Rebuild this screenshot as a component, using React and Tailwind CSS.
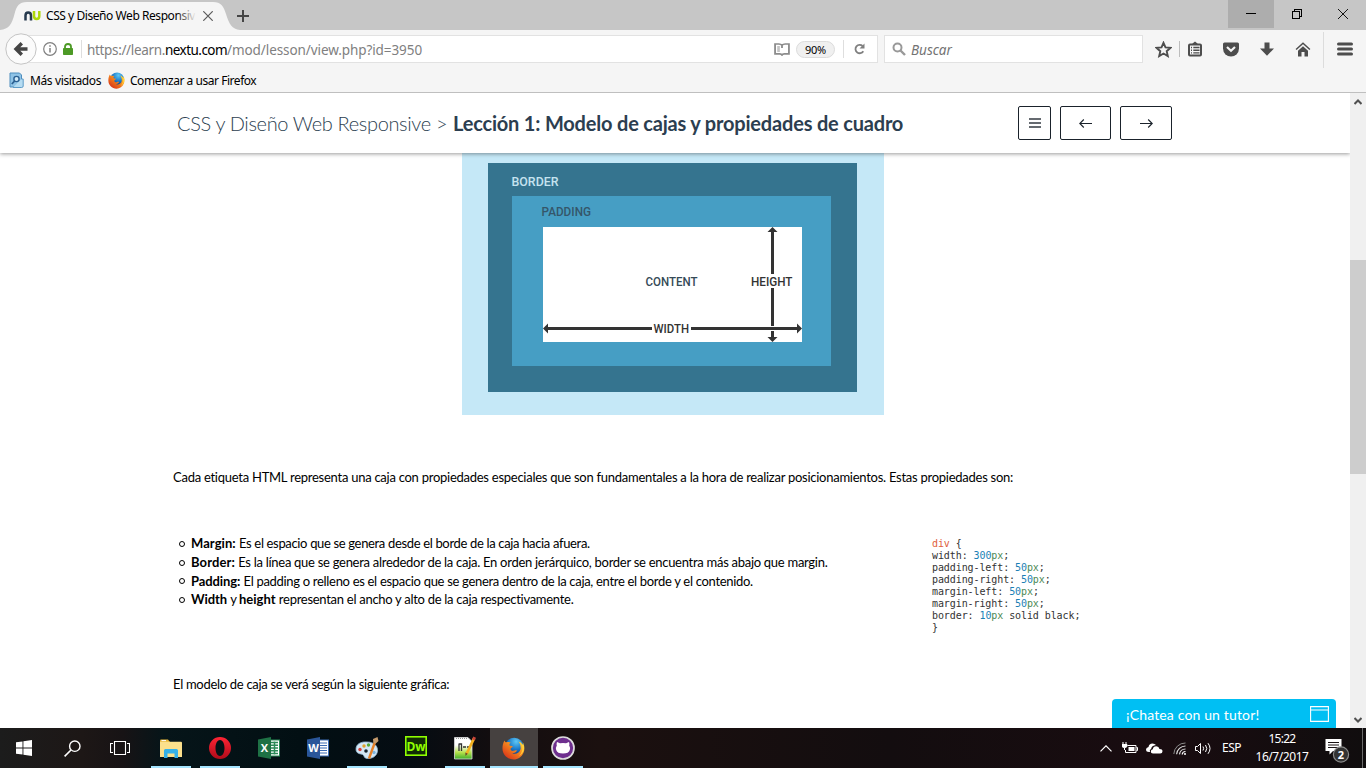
import React from "react";

const LATO = "font-['Lato','Liberation_Sans',sans-serif]";
const NOTO = "font-['Noto_Sans','Liberation_Sans',sans-serif]";

function FirefoxLogo({ size, id }) {
  return (
    <svg width={size} height={size} viewBox="0 0 24 24">
      <defs>
        <radialGradient id={id + "g"} cx="0.6" cy="0.2" r="0.7">
          <stop offset="0" stopColor="#5ec8f5" />
          <stop offset="0.6" stopColor="#1b78c8" />
          <stop offset="1" stopColor="#123e86" />
        </radialGradient>
        <linearGradient id={id + "f"} x1="0.9" y1="0.1" x2="0.2" y2="0.9">
          <stop offset="0" stopColor="#ffd83a" />
          <stop offset="0.4" stopColor="#f78d1e" />
          <stop offset="1" stopColor="#d93a1a" />
        </linearGradient>
      </defs>
      <circle cx="12.8" cy="10.6" r="9.8" fill={`url(#${id}g)`} />
      <path
        d="M2.6 3.6 C3 5 3.6 5.4 4.6 5.6 C6.2 5 8 5.2 9.2 6 C8.2 6.6 7.4 7.6 8 8.8 C9 9.4 10.4 9 11.2 9.6 C11 10.8 9.4 11 9 12 C8.6 13.8 10.4 14.8 12.2 14.4 C13.6 14 14.6 13.6 15.6 14.2 C14.6 16.4 12.6 17.2 10.6 17 C14.2 18.6 18.6 16.8 19.4 12.6 C19.8 9.6 18.8 6.6 17.2 4.8 C20.4 5.6 21.8 8 22 9 C22.3 8 22 6.4 21.4 5.2 C23.6 8 23.9 13 22.4 16.4 C20.4 21 16.4 23.6 12 23.5 C5.6 23.4 0.5 18.4 0.5 12 C0.5 8.600 1.2 6 2.6 3.600Z"
        fill={`url(#${id}f)`}
      />
      <path d="M20.6 7.500 C22.300 12 21 17 17.500 19.800 C21.600 18.400 23.900 13 22.600 8.600 Z" fill="#ffd23a" />
    </svg>
  );
}

function TabStrip() {
  return (
    <div className="flex h-[30px] bg-[#c6c6c6]">
      <div className="relative h-[30px] w-[230px] shrink-0">
        <svg className="absolute left-0 top-0" width="240" height="30" viewBox="0 0 240 30">
          <path d="M0 30 C9 29 12 24 14.500 14 C16.500 6 19 2 27 2 H213 C221 2 223.500 6 226 14 C229 24 232 29 240 30 Z" fill="#f5f5f5" />
        </svg>
        <div className="relative flex h-[30px] items-center pl-6">
          <svg className="mt-[2px] shrink-0" width="17" height="10" viewBox="0 0 17 10">
            <path d="M1.500 9.500 V4.500 Q1.500 1.500 4.200 1.500 Q7 1.500 7 4.500 V9.500" fill="none" stroke="#26394d" strokeWidth="2.500" />
            <path d="M10 0 V5 Q10 8 12.700 8 Q15.300 8 15.300 5 V0" fill="none" stroke="#aed80a" strokeWidth="2.500" />
          </svg>
          <div className={NOTO + " relative ml-[5px] mt-px w-[150px] overflow-hidden whitespace-nowrap text-[12px] leading-4 tracking-[-0.44px] text-black"}>
            CSS y Diseño Web Responsiv
            <div className="absolute right-0 top-0 h-4 w-5 bg-gradient-to-r from-[#f5f5f500] to-[#f5f5f5]" />
          </div>
          <svg className="ml-[7px] mt-[2px] shrink-0" width="10" height="10" viewBox="0 0 10 10">
            <path d="M0.300 0.300 L9.700 9.700 M9.700 0.300 L0.300 9.700" stroke="#5a5a5a" strokeWidth="1.200" />
          </svg>
        </div>
      </div>
      <svg className="ml-[7px] mt-[10px]" width="12" height="12" viewBox="0 0 12 12">
        <path d="M6 0 V12 M0 6 H12" stroke="#454545" strokeWidth="2" />
      </svg>
      <div className="ml-auto flex">
        <div className="flex h-7 w-[46px] items-center justify-center bg-[#adadad]">
          <svg width="10" height="10" shapeRendering="crispEdges"><path d="M0 4.500 H10" stroke="#000" /></svg>
        </div>
        <div className="flex h-7 w-[46px] items-center justify-center">
          <svg width="10" height="10" shapeRendering="crispEdges">
            <path d="M0.500 2.500 H7.500 V9.500 H0.500 Z M2.500 2.500 V0.500 H9.500 V7.500 H7.500" fill="none" stroke="#000" />
          </svg>
        </div>
        <div className="flex h-7 w-[46px] items-center justify-center">
          <svg width="10" height="10"><path d="M0 0 L10 10 M10 0 L0 10" stroke="#000" strokeWidth="0.900" /></svg>
        </div>
      </div>
    </div>
  );
}

function NavBar() {
  return (
    <div className="flex h-[39px] bg-[#f5f5f5]">
      <div className="relative flex w-[878px] shrink-0 pl-6 pt-[5px]">
        <div className="flex h-7 flex-1 items-center border border-[#e2e2e2] bg-white pl-[18px]">
          <svg width="14" height="14" viewBox="0 0 14 14">
            <circle cx="7" cy="7" r="6.300" fill="none" stroke="#808080" strokeWidth="1.200" />
            <path d="M7 6 V10.600 M7 3.200 V4.800" stroke="#808080" strokeWidth="1.500" />
          </svg>
          <svg className="ml-[6px]" width="10" height="12" viewBox="0 0 10 12">
            <rect x="0" y="5" width="10" height="7" rx="0.800" fill="#4d9a26" />
            <path d="M2 6 V3.800 Q2 1 5 1 Q8 1 8 3.800 V6" fill="none" stroke="#4d9a26" strokeWidth="1.800" />
          </svg>
          <div className="ml-2 h-[18px] w-px bg-[#dedede]" />
          <div className={NOTO + " ml-[5px] flex whitespace-nowrap pt-[2px] text-[13.500px] leading-5 text-[#808080]"}>
            <span className="w-[78px] tracking-[-0.34px]">https://learn.</span>
            <span className="w-[62px] tracking-[-0.54px] text-black">nextu.com</span>
            <span className="tracking-[-0.08px]">/mod/lesson/view.php?id=3950</span>
          </div>
          <svg className="ml-auto" width="16" height="13" viewBox="0 0 15 13" preserveAspectRatio="none">
            <path d="M7.500 2.200 Q6.500 1 4.500 1 H1 V10.800 H5.500 Q7 10.800 7.500 12 Q8 10.800 9.500 10.800 H14 V1 H10.500 Q8.500 1 7.500 2.200 V5" fill="none" stroke="#8c8c8c" strokeWidth="1.700" />
            <path d="M3 4 H5.500 M3 6 H5.500 M3 8 H5.500" stroke="#8c8c8c" />
          </svg>
          <div className={NOTO + " ml-[6px] flex h-[17px] w-[39px] items-center justify-center rounded-full border border-[#dcdcdc] bg-[#f0f0f0] pt-[2px] text-[11px] tracking-[-0.25px] text-black"}>
            90%
          </div>
          <div className="ml-[8px] h-[18px] w-px bg-[#dedede]" />
          <svg className="ml-[10px] mr-[12px]" width="11" height="12" viewBox="0 0 11 12">
            <path d="M8.600 3 A4.200 4.200 0 1 0 9.300 8.200" fill="none" stroke="#808080" strokeWidth="1.800" />
            <path d="M10.500 0.500 V5.500 H5.500 Z" fill="#808080" />
          </svg>
        </div>
        <svg className="absolute left-[5px] top-[3px]" width="32" height="32" viewBox="0 0 32 32">
          <circle cx="16" cy="16" r="15.200" fill="#fbfbfb" stroke="#c4c4c4" />
          <path d="M16.800 10.200 L11 16 L16.800 21.800 M11.500 16 H22.500" fill="none" stroke="#454545" strokeWidth="3.400" />
        </svg>
      </div>
      <div className="ml-[6px] mt-[5px] flex h-7 w-[259px] shrink-0 items-center border border-[#e2e2e2] bg-white pl-[7px]">
        <svg width="14" height="14" viewBox="0 0 14 14">
          <circle cx="5.500" cy="5.500" r="4" fill="none" stroke="#999" strokeWidth="2" />
          <path d="M8.500 8.500 L13 13" stroke="#999" strokeWidth="2.400" />
        </svg>
        <span className={NOTO + " ml-[5px] pt-[2px] text-[13.500px] italic text-[#737373]"}>Buscar</span>
      </div>
      <div className="flex h-[38px] items-center pl-[12px]">
        <svg width="17" height="17" viewBox="0 0 17 17">
          <path d="M8.500 1.800 L10.500 6.400 L15.400 6.900 L11.700 10.200 L12.800 15.100 L8.500 12.500 L4.200 15.100 L5.300 10.200 L1.600 6.900 L6.500 6.400 Z" fill="none" stroke="#4d4d4d" strokeWidth="1.900" />
        </svg>
        <div className="ml-[7px] h-[16px] w-px bg-[#bdbdbd]" />
        <svg className="ml-[8px]" width="14" height="16" viewBox="0 0 14 16">
          <path d="M4.500 2.500 L7 0.500 L9.500 2.500 V4 H4.500 Z" fill="#4d4d4d" />
          <rect x="1" y="3.500" width="12" height="11" rx="1" fill="none" stroke="#4d4d4d" strokeWidth="2" />
          <path d="M3 6.500 H4 M5.300 6.500 H11.500 M3 9.200 H4 M5.300 9.200 H11.500 M3 11.900 H4 M5.300 11.900 H11.500" stroke="#4d4d4d" strokeWidth="1.400" />
        </svg>
        <svg className="ml-[21px]" width="16" height="15" viewBox="0 0 16 15">
          <path d="M1.500 0.500 H14.500 Q16 0.500 16 2 V6.500 A8 8 0 0 1 0 6.500 V2 Q0 0.500 1.500 0.500 Z" fill="#4d4d4d" />
          <path d="M4 5 L8 8.800 L12 5" fill="none" stroke="#f5f5f5" strokeWidth="2.200" />
        </svg>
        <svg className="ml-[21px]" width="14" height="14" viewBox="0 0 14 14">
          <path d="M4.500 0.500 H9.500 V6.500 H14 L7 13.800 L0 6.500 H4.500 Z" fill="#4d4d4d" />
        </svg>
        <svg className="ml-[21px]" width="16" height="15" viewBox="0 0 15 15">
          <path d="M0.600 7.500 L7.500 1.200 L14.400 7.500" fill="none" stroke="#4d4d4d" strokeWidth="1.500" />
          <path d="M2.500 8.800 L7.500 4.300 L12.500 8.800 V14.500 H9 V10 H6 V14.500 H2.500 Z" fill="#4d4d4d" />
        </svg>
        <div className="ml-[12px] mt-[2px] h-[36px] w-px bg-[#dcdcdc]" />
        <svg className="ml-[13px]" width="16" height="14" viewBox="0 0 16 14">
          <path d="M1.500 2 H14.500 M1.500 7 H14.500 M1.500 12 H14.500" stroke="#4d4d4d" strokeWidth="3" strokeLinecap="round" />
        </svg>
      </div>
    </div>
  );
}

function Bookmarks() {
  return (
    <div className={NOTO + " flex h-6 items-center whitespace-nowrap border-b border-[#bfbfbf] bg-[#f5f5f5] pl-[9px] text-[12px] text-black"}>
      <svg width="16" height="17" viewBox="0 0 16 17">
        <path d="M1 1 H10.500 L12.500 3 V15 H1 Z" fill="#8fc3e6" stroke="#4d8dbd" />
        <path d="M12.500 7 H14.200 V14 Q14.200 15.500 12.500 15.500 H4" fill="#b6dcf2" stroke="#5d9bc7" />
        <circle cx="7.500" cy="7" r="2.600" fill="#cfe9f8" stroke="#2a5f91" strokeWidth="1.400" />
        <path d="M5.600 9 L2.800 12" stroke="#2a5f91" strokeWidth="1.800" />
      </svg>
      <span className="ml-[5px] w-[72px] tracking-[-0.38px]">Más visitados</span>
      <span className="ml-[6px]"><FirefoxLogo size={17} id="bm" /></span>
      <span className="ml-[5px] tracking-[-0.46px]">Comenzar a usar Firefox</span>
    </div>
  );
}

function LessonHeader() {
  const btn = "flex h-[34px] items-center justify-center rounded-[2px] border border-[#1a222b] bg-white";
  return (
    <header className={LATO + " relative z-10 flex h-[60px] shrink-0 items-center whitespace-nowrap bg-white pl-[177px] text-[20px] text-[#2c3e50] shadow-[0_1px_4px_rgba(0,0,0,0.4)]"}>
      <span className="w-[276px] font-light tracking-[-0.35px]">CSS y Diseño Web Responsive &gt;</span>
      <span className="w-[565px] font-bold tracking-[-0.19px]">Lección 1: Modelo de cajas y propiedades de cuadro</span>
      <div className="flex">
        <div className={btn + " w-[33px]"}>
          <svg width="12" height="10" viewBox="0 0 12 10"><path d="M0 1 H12 M0 5 H12 M0 9 H12" stroke="#333a42" strokeWidth="1.300" /></svg>
        </div>
        <div className={btn + " ml-[9px] w-[51px]"}>
          <svg width="13" height="9" viewBox="0 0 13 9"><path d="M4.800 0.500 L0.800 4.500 L4.800 8.500 M0.800 4.500 H13" fill="none" stroke="#1a222b" strokeWidth="1.100" /></svg>
        </div>
        <div className={btn + " ml-[9px] w-[52px]"}>
          <svg width="13" height="9" viewBox="0 0 13 9"><path d="M8.200 0.500 L12.200 4.500 L8.200 8.500 M0 4.500 H12.200" fill="none" stroke="#1a222b" strokeWidth="1.100" /></svg>
        </div>
      </div>
    </header>
  );
}

function BoxModel() {
  return (
    <svg className="ml-[462px] block shrink-0" width="422" height="262" viewBox="0 0 422 262">
      <rect width="422" height="262" fill="#c5e8f7" />
      <rect x="26" y="10" width="369" height="229" fill="#35748f" />
      <rect x="50" y="43" width="319" height="170" fill="#469ec4" />
      <rect x="81" y="74" width="259" height="115" fill="#fff" />
      <path d="M310.500 77 V121 M310.500 135 V173 M310.500 178 V186 M84 175.500 H190 M229 175.500 H337" stroke="#333" strokeWidth="3" />
      <g fill="#333">
        <path d="M310.500 74 L315.500 79 H305.500 Z" />
        <path d="M310.500 189 L315.500 184 H305.500 Z" />
        <path d="M81 175.500 L86 170.500 V180.500 Z" />
        <path d="M340 175.500 L335 170.500 V180.500 Z" />
      </g>
      <g className="font-['Roboto',sans-serif] text-[13px] font-medium">
        <text x="49.500" y="32.700" textLength="47" lengthAdjust="spacingAndGlyphs" fill="#c5e3ef">BORDER</text>
        <text x="79.500" y="63" textLength="49.500" lengthAdjust="spacingAndGlyphs" fill="#35566a">PADDING</text>
        <text x="183.500" y="133" textLength="52" lengthAdjust="spacingAndGlyphs" fill="#354a57">CONTENT</text>
        <text x="289" y="132.700" textLength="41.500" lengthAdjust="spacingAndGlyphs" fill="#333">HEIGHT</text>
        <text x="191.500" y="180" textLength="35.500" lengthAdjust="spacingAndGlyphs" fill="#333">WIDTH</text>
      </g>
    </svg>
  );
}

function Row({ children }) {
  return (
    <li className="flex h-[18.700px] items-center">
      <span className="mr-[6px] mt-[1px] size-[6px] rounded-full border border-black" />
      <span>{children}</span>
    </li>
  );
}

function Declaration({ name, value, rest }) {
  return (
    <div>
      {name}: <span className="text-[#1b7fb5]">{value}</span>
      <span className="text-[#4d8a55]">px</span>
      {rest};
    </div>
  );
}

function Lesson() {
  return (
    <div className="relative flex min-w-0 flex-1 flex-col overflow-hidden bg-white">
      <LessonHeader />
      <BoxModel />
      <div className={LATO + " whitespace-nowrap pl-[173px] text-[13px] leading-[18px] text-black"}>
        <p className="mt-[53px] tracking-[-0.26px]">
          Cada etiqueta HTML representa una caja con propiedades especiales que son fundamentales a la hora de realizar posicionamientos. Estas propiedades son:
        </p>
        <div className="mt-[48px] flex h-[97px]">
          <ul className="w-[759px] pl-[6px]">
            <Row>
              <b className="tracking-[0.05px]">Margin:</b> <span className="tracking-[-0.34px]">Es el espacio que se genera desde el borde de la caja hacia afuera.</span>
            </Row>
            <Row>
              <b className="tracking-[0.1px]">Border:</b> <span className="tracking-[-0.28px]">Es la línea que se genera alrededor de la caja. En orden jerárquico, border se encuentra más abajo que margin.</span>
            </Row>
            <Row>
              <b className="tracking-[-0.1px]">Padding:</b> <span className="tracking-[-0.31px]">El padding o relleno es el espacio que se genera dentro de la caja, entre el borde y el contenido.</span>
            </Row>
            <Row>
              <b className="tracking-[-0.1px]">Width</b> <span className="tracking-[-0.5px]">y </span>
              <b>height</b> <span className="tracking-[-0.28px]">representan el ancho y alto de la caja respectivamente.</span>
            </Row>
          </ul>
          <div className="pt-[4px] font-['DejaVu_Sans_Mono','Liberation_Mono',monospace] text-[10px] leading-[12.050px] tracking-[-0.09px] text-[#333]">
            <div><span className="text-[#e0603c]">div</span> {"{"}</div>
            <Declaration name="width" value="300" />
            <Declaration name="padding-left" value="50" />
            <Declaration name="padding-right" value="50" />
            <Declaration name="margin-left" value="50" />
            <Declaration name="margin-right" value="50" />
            <Declaration name="border" value="10" rest=" solid black" />
            <div>{"}"}</div>
          </div>
        </div>
        <p className="mt-[44px] tracking-[-0.3px]">El modelo de caja se verá según la siguiente gráfica:</p>
      </div>
      <div className={LATO + " absolute bottom-0 right-[14px] flex h-[29px] w-[224px] items-center justify-between rounded-t-[4px] bg-[#00bff3] pl-[14px] pr-[7px] text-[14px] tracking-[0.15px] text-white"}>
        <span className="pt-px">¡Chatea con un tutor!</span>
        <svg className="mt-px" width="19" height="16" viewBox="0 0 19 16">
          <path d="M0.600 0.600 H18.400 V15.400 H0.600 Z M0.600 4 H18.400" fill="none" stroke="#fff" strokeWidth="1.100" />
        </svg>
      </div>
    </div>
  );
}

function Scrollbar() {
  return (
    <div className="flex w-4 shrink-0 flex-col items-center bg-[#f0f0f0]">
      <svg className="mt-[6px]" width="8" height="6" viewBox="0 0 8 6"><path d="M0.500 5 L4 1.500 L7.500 5" fill="none" stroke="#505050" strokeWidth="2" /></svg>
      <div className="mt-[155px] h-[214px] w-full bg-[#cdcdcd]" />
      <svg className="mb-[5px] mt-auto" width="8" height="6" viewBox="0 0 8 6"><path d="M0.500 1 L4 4.500 L7.500 1" fill="none" stroke="#505050" strokeWidth="2" /></svg>
    </div>
  );
}

function TaskButton({ children, line, active }) {
  return (
    <div className="flex h-10 w-[49px] justify-center">
      <div className={active ? "flex w-12 flex-col bg-[#464140]" : "flex w-10 flex-col"}>
        <div className="flex h-[38px] items-center justify-center pt-[2px]">{children}</div>
        {line && <div className="h-[2px] bg-[#a5e5ff]" />}
      </div>
    </div>
  );
}

function Office({ dark, light, letter, grid }) {
  return (
    <svg width="22" height="22" viewBox="0 0 22 22">
      <rect x="11" y="3" width="10.500" height="16" fill="#fff" stroke={light} />
      {grid ? (
        <path d="M13 5.500 H20 M13 8.200 H20 M13 11 H20 M13 13.800 H20 M13 16.500 H20 M16.500 4.500 V17.500" stroke={light} strokeWidth="1.500" />
      ) : (
        <path d="M13 6 H20 M13 8.500 H20 M13 11 H20 M13 13.500 H20 M13 16 H20" stroke={light} strokeWidth="1.200" />
      )}
      <path d="M0 2.500 L13 0 V22 L0 19.500 Z" fill={dark} />
      <text x="6.500" y="15" textAnchor="middle" className="font-['Open_Sans',sans-serif] text-[11px] font-bold" fill="#fff">{letter}</text>
    </svg>
  );
}

function Taskbar() {
  return (
    <div className="flex h-10 items-center bg-[linear-gradient(90deg,#1c1c1c_0%,#1d1716_6%,#171315_9%,#061519_12%,#020f13_22%,#050c12_30%,#120d0f_36%,#1b100f_44%,#130d0f_65%,#190c10_85%,#100d0e_100%)] text-white">
      <div className="flex w-12 justify-center">
        <svg width="16" height="16" viewBox="0 0 16 16"><path d="M0 2.300 L6.500 1.400 V7.500 H0 Z M7.400 1.200 L16 0 V7.500 H7.400 Z M0 8.400 H6.500 V14.600 L0 13.700 Z M7.400 8.400 H16 V16 L7.400 14.800 Z" fill="#fff" /></svg>
      </div>
      <div className="flex w-12 justify-center">
        <svg width="17" height="17" viewBox="0 0 17 17"><circle cx="10.800" cy="6.200" r="5.200" fill="none" stroke="#fff" strokeWidth="1.400" /><path d="M7 10 L0.600 16.400" stroke="#fff" strokeWidth="1.600" /></svg>
      </div>
      <div className="flex w-[50px] justify-center pr-[2px]">
        <svg width="20" height="14" viewBox="0 0 20 14"><path d="M4.500 0.500 H15.500 V13.500 H4.500 Z M3 2.500 H0.500 V11.500 H3 M17 2.500 H19.500 V11.500 H17" fill="none" stroke="#fff" strokeWidth="1.100" /></svg>
      </div>
      <TaskButton line>
        <svg width="22" height="19" viewBox="0 0 22 19">
          <path d="M0 1.500 Q0 0.500 1 0.500 H8 L10 3 H0 Z" fill="#e9b93c" />
          <path d="M0 2.800 H21 Q22 2.800 22 4 V18 H0 Z" fill="#fbe08c" />
          <path d="M1.500 1.600 H6" stroke="#fff" />
          <path d="M4 19 V11.500 Q4 10 5.500 10 H16.500 Q18 10 18 11.500 V19 H14.500 V14.500 H7.500 V19 Z" fill="#35b1e8" />
        </svg>
      </TaskButton>
      <TaskButton line>
        <svg width="24" height="24" viewBox="0 0 24 24">
          <defs><linearGradient id="op" x1="0" y1="0" x2="0" y2="1"><stop offset="0" stopColor="#ff2434" /><stop offset="1" stopColor="#b00c1a" /></linearGradient></defs>
          <path d="M12 1 A11 11 0 1 0 12 23 A11 11 0 1 0 12 1 Z M12 4 C15 4 16.500 8 16.500 12 C16.500 16 15 20 12 20 C9 20 7.500 16 7.500 12 C7.500 8 9 4 12 4 Z" fill="url(#op)" fillRule="evenodd" />
        </svg>
      </TaskButton>
      <TaskButton><Office dark="#1e7145" light="#2b8a57" letter="X" grid /></TaskButton>
      <TaskButton><Office dark="#2a5699" light="#3c6cb4" letter="W" /></TaskButton>
      <TaskButton line>
        <svg width="24" height="24" viewBox="0 0 24 24">
          <path d="M1 13 C1 8 6 5.500 12 6 C19 6 23 10 22.500 15 C22 20 17 23 12 22.500 C9 22.500 9.500 19.500 7.500 18.500 C5 17.500 1 18 1 13 Z" fill="#d3e7f5" stroke="#8db4d0" strokeWidth="0.800" />
          <circle cx="5" cy="13.500" r="1.700" fill="#d8403a" /><circle cx="9" cy="10" r="1.700" fill="#e0a22c" /><circle cx="13.500" cy="9" r="1.700" fill="#56a83a" />
          <circle cx="19" cy="16.500" r="1.700" fill="#7cb4de" /><circle cx="11" cy="15" r="1.800" fill="#14232d" />
          <path d="M14 22.500 L20 6" stroke="#e6822a" strokeWidth="2.400" />
          <path d="M18.300 6.800 L18 3 L22.500 1 L23.500 5 L20.800 7.600 Z" fill="#c49a6c" />
        </svg>
      </TaskButton>
      <TaskButton>
        <svg className="-mt-[4px]" width="22" height="20" viewBox="0 0 22 20">
          <rect x="0.800" y="0.800" width="20.400" height="18.400" fill="#112b05" stroke="#8fff00" strokeWidth="1.600" />
          <text x="11" y="14.500" textAnchor="middle" className="font-['Open_Sans',sans-serif] text-[12px] font-bold" fill="#8fff00">Dw</text>
        </svg>
      </TaskButton>
      <TaskButton line>
        <svg width="24" height="24" viewBox="0 0 24 24">
          <defs><linearGradient id="np" x1="0" y1="0" x2="0" y2="1"><stop offset="0.350" stopColor="#fff" /><stop offset="0.700" stopColor="#b4e04c" /><stop offset="1" stopColor="#3fae2a" /></linearGradient></defs>
          <path d="M1.500 1.500 H15 L19 5.500 V23 H1.500 Z" fill="url(#np)" stroke="#ddd" strokeWidth="0.800" />
          <path d="M3 2.500 H14" stroke="#999" strokeDasharray="1 1" />
          <path d="M6 15 V7.500 M6 8 H8.500 V15 M10 11 H13 M14 11 H16.500" stroke="#333" strokeWidth="1.300" fill="none" />
          <path d="M13.500 18 L21 2.500" stroke="#f2b01e" strokeWidth="2.800" /><path d="M20.400 3.800 L21.600 1.200" stroke="#c8453a" strokeWidth="3" />
          <path d="M12.300 16.500 L14.800 17.800 L12.500 20 Z" fill="#6b4a2a" />
        </svg>
      </TaskButton>
      <TaskButton line active><FirefoxLogo size={23} id="tb" /></TaskButton>
      <TaskButton line>
        <svg width="24" height="24" viewBox="0 0 24 24">
          <circle cx="12" cy="12" r="11" fill="#6e2f8e" stroke="#ddd" strokeWidth="1.700" />
          <path d="M6 6 L9 7.200 Q12 6.600 15 7.200 L18 6 Q18.800 8 18.200 9.500 Q19.500 11.500 18.800 14 Q17.800 17.500 12 17.500 Q6.200 17.500 5.200 14 Q4.500 11.500 5.800 9.500 Q5.200 8 6 6 Z" fill="#fff" />
        </svg>
      </TaskButton>
      <div className={NOTO + " ml-auto flex h-10 items-center text-[12px] leading-[18px]"}>
        <svg width="12" height="7" viewBox="0 0 12 7"><path d="M0.500 6.300 L6 0.800 L11.500 6.300" fill="none" stroke="#fff" strokeWidth="1.200" /></svg>
        <svg className="ml-[10px]" width="16" height="12" viewBox="0 0 16 12">
          <path d="M5.500 3.500 H14 V10.500 H3.500 V8 M14.500 5.500 H15.500 V8.500 H14.500" fill="none" stroke="#fff" />
          <rect x="6.500" y="5" width="6" height="4" fill="#fff" />
          <path d="M1 0 V2 M4 0 V2 M0 2.500 H5 V4 Q5 5.500 2.500 5.500 Q0 5.500 0 4 Z M2.500 5.500 V8" fill="#fff" stroke="#fff" />
        </svg>
        <svg className="ml-[8px]" width="17" height="11" viewBox="0 0 17 11">
          <path d="M4 9 H3 Q0 9 0 6.500 Q0 4.500 2.500 4 Q3 0.500 6.500 0.500 Q8.500 0.500 10 2 Q5.500 2.500 5.300 5.500 Q3 7 4 9 Z" fill="#fff" />
          <path d="M7 10.500 Q4.800 10.500 4.800 8.500 Q4.800 6.500 6.800 6.200 Q7.200 3.200 10.300 3.200 Q12.800 3.200 13.500 6 Q16.500 6 16.500 8.300 Q16.500 10.500 14.200 10.500 Z" fill="#fff" />
        </svg>
        <svg className="ml-[10px]" width="13" height="13" viewBox="0 0 13 13">
          <path d="M0.800 12 A11.500 11.500 0 0 1 12.500 1" fill="none" stroke="#8a8a8a" />
          <path d="M3.600 12.200 A9 9 0 0 1 12.500 4 M6.500 12.400 A6 6 0 0 1 12.500 7" fill="none" stroke="#ddd" strokeWidth="1.200" />
          <path d="M9.200 12.500 A3.300 3.300 0 0 1 12.500 9.500" fill="none" stroke="#fff" strokeWidth="1.200" /><circle cx="12" cy="12" r="1" fill="#fff" />
        </svg>
        <svg className="ml-[9px]" width="17" height="13" viewBox="0 0 17 13">
          <path d="M0.500 4.500 H2.500 L5.500 1.500 V11.500 L2.500 8.500 H0.500 Z" fill="none" stroke="#fff" />
          <path d="M8 4.500 Q9.300 6.500 8 8.500 M10.500 3 Q13 6.500 10.500 10 M13 1.200 Q17 6.500 13 11.800" fill="none" stroke="#fff" />
        </svg>
        <span className="ml-[10px] w-[21px] tracking-[-0.5px]">ESP</span>
        <div className="ml-[10px] flex w-[58px] flex-col items-center">
          <span className="tracking-[-0.73px]">15:22</span>
          <span className="tracking-[-0.44px]">16/7/2017</span>
        </div>
        <div className="ml-[14px] mt-[3px] h-[24px] w-[25px]">
          <svg width="25" height="26" viewBox="0 0 25 26">
            <path d="M0.500 1 H16.500 V13 H8 L4.500 16.500 V13 H0.500 Z" fill="#fff" />
            <path d="M3 4.500 H14 M3 7 H14 M3 9.500 H14" stroke="#1a1214" />
            <circle cx="16" cy="16.500" r="7.600" fill="#333" stroke="#8a8a8a" strokeWidth="1.200" />
            <text x="16" y="20.500" textAnchor="middle" className="text-[11px] font-bold" fill="#fff">2</text>
          </svg>
        </div>
        <div className="ml-[12px] mr-[3px] h-10 w-px bg-[#6a6a6a]" />
      </div>
    </div>
  );
}

export default function App() {
  return (
    <div className="flex h-[768px] w-[1366px] flex-col overflow-hidden bg-white">
      <TabStrip />
      <NavBar />
      <Bookmarks />
      <div className="flex h-[635px] shrink-0">
        <Lesson />
        <Scrollbar />
      </div>
      <Taskbar />
    </div>
  );
}
